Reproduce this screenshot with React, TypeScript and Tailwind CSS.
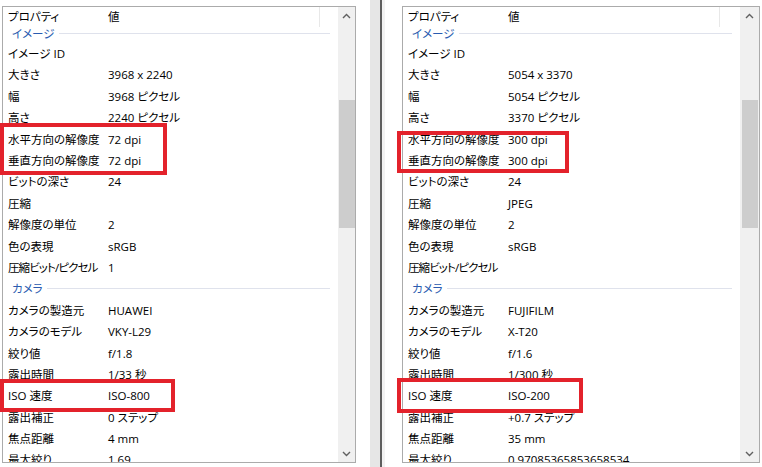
type Row = { label: string; value?: string; group?: boolean };

const leftRows: Row[] = [
  { label: 'イメージ ID' },
  { label: '大きさ', value: '3968 x 2240' },
  { label: '幅', value: '3968 ピクセル' },
  { label: '高さ', value: '2240 ピクセル' },
  { label: '水平方向の解像度', value: '72 dpi' },
  { label: '垂直方向の解像度', value: '72 dpi' },
  { label: 'ビットの深さ', value: '24' },
  { label: '圧縮' },
  { label: '解像度の単位', value: '2' },
  { label: '色の表現', value: 'sRGB' },
  { label: '圧縮ビット/ピクセル', value: '1' },
  { label: 'カメラ', group: true },
  { label: 'カメラの製造元', value: 'HUAWEI' },
  { label: 'カメラのモデル', value: 'VKY-L29' },
  { label: '絞り値', value: 'f/1.8' },
  { label: '露出時間', value: '1/33 秒' },
  { label: 'ISO 速度', value: 'ISO-800' },
  { label: '露出補正', value: '0 ステップ' },
  { label: '焦点距離', value: '4 mm' },
  { label: '最大絞り', value: '1.69' },
];

const rightRows: Row[] = [
  { label: 'イメージ ID' },
  { label: '大きさ', value: '5054 x 3370' },
  { label: '幅', value: '5054 ピクセル' },
  { label: '高さ', value: '3370 ピクセル' },
  { label: '水平方向の解像度', value: '300 dpi' },
  { label: '垂直方向の解像度', value: '300 dpi' },
  { label: 'ビットの深さ', value: '24' },
  { label: '圧縮', value: 'JPEG' },
  { label: '解像度の単位', value: '2' },
  { label: '色の表現', value: 'sRGB' },
  { label: '圧縮ビット/ピクセル' },
  { label: 'カメラ', group: true },
  { label: 'カメラの製造元', value: 'FUJIFILM' },
  { label: 'カメラのモデル', value: 'X-T20' },
  { label: '絞り値', value: 'f/1.6' },
  { label: '露出時間', value: '1/300 秒' },
  { label: 'ISO 速度', value: 'ISO-200' },
  { label: '露出補正', value: '+0.7 ステップ' },
  { label: '焦点距離', value: '35 mm' },
  { label: '最大絞り', value: '0.97085365853658534' },
];

function Chevron({ up }: { up?: boolean }) {
  return (
    <svg width="9" height="6" viewBox="0 0 9 6">
      <polyline
        points={up ? '1,5 4.5,1.5 8,5' : '1,1 4.5,4.5 8,1'}
        fill="none"
        stroke="#606060"
        strokeWidth="1.4"
      />
    </svg>
  );
}

function PropertyPanel({ rows, width, scrollWidth }: { rows: Row[]; width: string; scrollWidth: string }) {
  return (
    <div className={`mt-[6px] h-[457px] ${width} shrink-0 border border-[#ababab] flex bg-white`}>
      <div className="flex-1 flex flex-col overflow-hidden">
        <div className="h-[20px] flex items-center shrink-0">
          <div className="w-[100px] pl-[5px]">プロパティ</div>
          <div className="w-[217px] pl-[5px] h-full flex items-center border-r border-[#e8e8e8]">値</div>
        </div>
        <div className="h-[16px] flex shrink-0">
          <span className="pl-[9px] pt-[1px] leading-[12px] text-[#2b5cb0]">イメージ</span>
          <div className="ml-[4px] mr-[8px] mt-[6px] flex-1 h-px bg-[#dfe2ec]" />
        </div>
        {rows.map((r) =>
          r.group ? (
            <div key={r.label} className="h-[21.4px] flex items-center shrink-0">
              <span className="pl-[9px] text-[#2b5cb0]">{r.label}</span>
              <div className="ml-[4px] mr-[8px] flex-1 h-px bg-[#dfe2ec]" />
            </div>
          ) : (
            <div key={r.label} className="h-[21.4px] flex items-center shrink-0 whitespace-nowrap">
              <div className={`w-[100px] pl-[5px] ${r.label.length > 9 ? 'tracking-[-0.9px]' : ''}`}>{r.label}</div>
              <div className="pl-[5px]">{r.value ?? ''}</div>
            </div>
          )
        )}
      </div>
      <div className={`${scrollWidth} bg-[#f0f0f0] flex flex-col items-center shrink-0`}>
        <div className="h-[17px] flex items-center justify-center">
          <Chevron up />
        </div>
        <div className="mt-[76px] h-[128px] w-[16px] bg-[#cdcdcd]" />
        <div className="flex-1" />
        <div className="h-[17px] flex items-center justify-center">
          <Chevron />
        </div>
      </div>
    </div>
  );
}

export default function App() {
  return (
    <div
      className="relative w-[762px] h-[467px] bg-white overflow-hidden flex text-[11.5px] text-black [font-feature-settings:'palt']"
      style={{ fontFamily: '"Open Sans", "Noto Sans CJK JP", sans-serif' }}
    >
      <div className="w-[2px] shrink-0" />
      <PropertyPanel rows={leftRows} width="w-[354px]" scrollWidth="w-[17px]" />
      <div className="w-[14px] shrink-0" />
      <div className="w-[10px] shrink-0 bg-[#e6e6e6]" />
      <div className="w-[2px] shrink-0 bg-[#5e5e5e]" />
      <div className="w-[3px] shrink-0 bg-[#f2f2f2]" />
      <div className="w-[17px] shrink-0" />
      <PropertyPanel rows={rightRows} width="w-[358px]" scrollWidth="w-[19px]" />

      <div className="absolute left-0 top-[123px] w-[167px] h-[52px] border-4 border-[#e3222b]" />
      <div className="absolute left-0 top-[379px] w-[175px] h-[33px] border-4 border-[#e3222b]" />
      <div className="absolute left-[397px] top-[131px] w-[172px] h-[42px] border-4 border-[#e3222b]" />
      <div className="absolute left-[397px] top-[378px] w-[186px] h-[35px] border-4 border-[#e3222b]" />
    </div>
  );
}
